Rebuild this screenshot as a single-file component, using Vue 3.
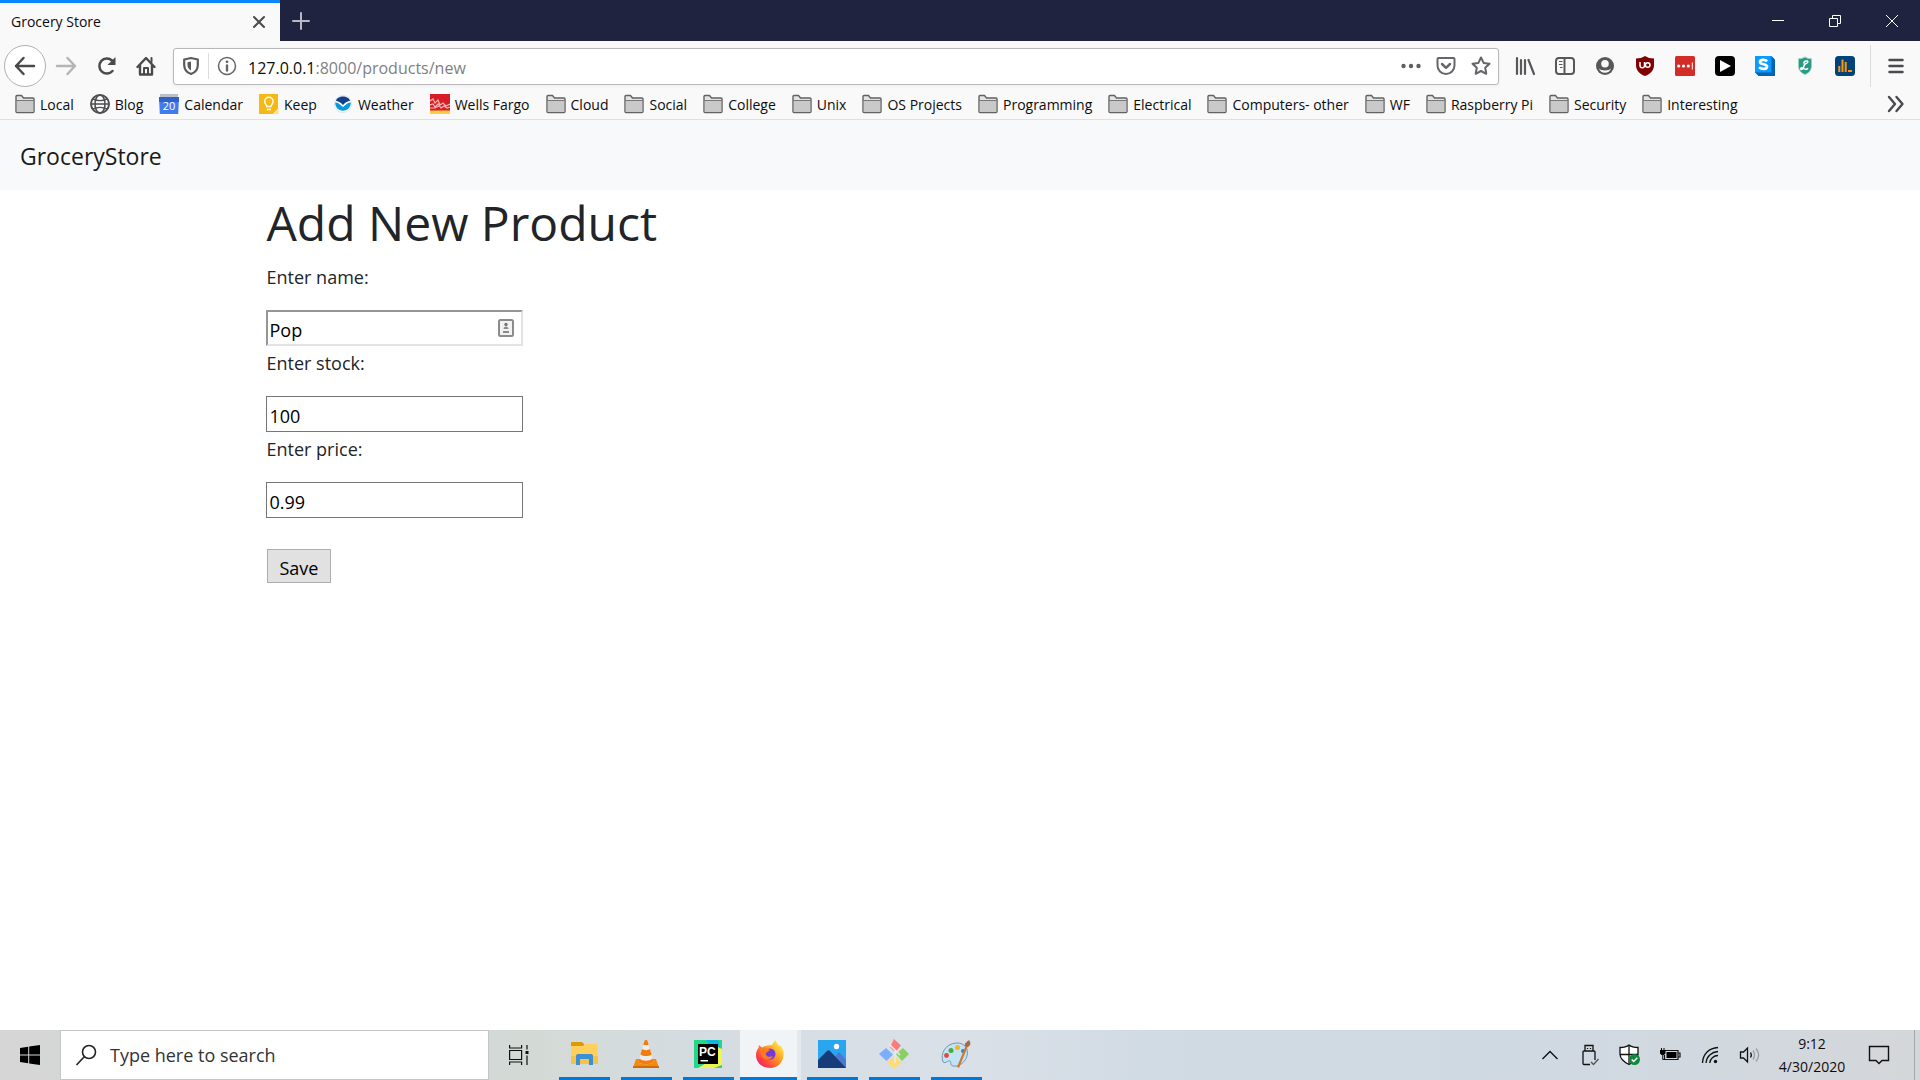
<script setup>
import { ref } from 'vue'

const bookmarks = [
  { name: 'Local', icon: 'folder' },
  { name: 'Blog', icon: 'globe' },
  { name: 'Calendar', icon: 'calendar' },
  { name: 'Keep', icon: 'keep' },
  { name: 'Weather', icon: 'weather' },
  { name: 'Wells Fargo', icon: 'wells' },
  { name: 'Cloud', icon: 'folder' },
  { name: 'Social', icon: 'folder' },
  { name: 'College', icon: 'folder' },
  { name: 'Unix', icon: 'folder' },
  { name: 'OS Projects', icon: 'folder' },
  { name: 'Programming', icon: 'folder' },
  { name: 'Electrical', icon: 'folder' },
  { name: 'Computers- other', icon: 'folder' },
  { name: 'WF', icon: 'folder' },
  { name: 'Raspberry Pi', icon: 'folder' },
  { name: 'Security', icon: 'folder' },
  { name: 'Interesting', icon: 'folder' },
]

const product = ref({ name: 'Pop', stock: '100', price: '0.99' })
const search = ref('')
</script>

<template>
  <div class="screen">
    <header class="titlebar">
      <div class="tab">
        <span>Grocery Store</span>
        <button class="icon-btn" aria-label="Close tab">
          <svg width="14" height="14" viewBox="0 0 14 14"><path d="M2 2l10 10M12 2L2 12" stroke="#4a4a4c" stroke-width="2" stroke-linecap="round" /></svg>
        </button>
      </div>
      <button class="icon-btn new-tab" aria-label="New tab">
        <svg width="18" height="18" viewBox="0 0 18 18"><path d="M9 1v16M1 9h16" stroke="#b9b9c4" stroke-width="2" stroke-linecap="round" /></svg>
      </button>
      <div class="window-buttons">
        <button class="icon-btn" aria-label="Minimize">
          <svg width="14" height="14" viewBox="0 0 14 14"><path d="M1 6.500h12" stroke="#fff" /></svg>
        </button>
        <button class="icon-btn" aria-label="Restore">
          <svg width="14" height="14" viewBox="0 0 14 14" fill="none" stroke="#fff"><path d="M1.500 4.500h8v8h-8zM4.500 4V1.500h8v8H10" /></svg>
        </button>
        <button class="icon-btn" aria-label="Close">
          <svg width="14" height="14" viewBox="0 0 14 14"><path d="M1 1l12 12M13 1L1 13" stroke="#fff" /></svg>
        </button>
      </div>
    </header>

    <nav class="toolbar" aria-label="Navigation">
      <button class="icon-btn back" aria-label="Back">
        <svg width="22" height="20" viewBox="0 0 22 20" fill="none" stroke="#4a4a4c" stroke-width="2.500" stroke-linecap="round" stroke-linejoin="round"><path d="M20 10H2M9.500 2L2 10l7.500 8" /></svg>
      </button>
      <button class="icon-btn nav" aria-label="Forward">
        <svg width="22" height="20" viewBox="0 0 22 20" fill="none" stroke="#b5b5b6" stroke-width="2.500" stroke-linecap="round" stroke-linejoin="round"><path d="M2 10h18M12.500 2L20 10l-7.500 8" /></svg>
      </button>
      <button class="icon-btn nav" aria-label="Reload">
        <svg width="20" height="20" viewBox="0 0 20 20"><path d="M16.500 15A7.500 7.500 0 1 1 16 4.500" fill="none" stroke="#4a4a4c" stroke-width="2.500" stroke-linecap="round" /><path d="M19.500 1v8h-8z" fill="#4a4a4c" /></svg>
      </button>
      <button class="icon-btn nav" aria-label="Home">
        <svg width="20" height="20" viewBox="0 0 20 20" fill="none" stroke="#4a4a4c" stroke-width="2.400" stroke-linejoin="round" stroke-linecap="round"><path d="M1.500 11L10 2l8.500 9M4 9.500V18.500h12V9.500" /><path d="M8 18v-6h4v6" stroke-width="2" /><path d="M15.500 2v4" stroke-width="2" /></svg>
      </button>
      <div class="urlbar">
        <svg width="18" height="20" viewBox="0 0 18 20"><path d="M9 2l6.800 1.500V9c0 4-2.500 7.500-6.800 9-4.300-1.500-6.800-5-6.800-9V3.500z" fill="none" stroke="#5a5a5c" stroke-width="2.200" stroke-linejoin="round" /><path d="M9 5.500v9C6.500 13 5.500 11 5.500 9V6.200z" fill="#5a5a5c" /></svg>
        <span class="divider"></span>
        <svg width="20" height="20" viewBox="0 0 20 20"><circle cx="10" cy="10" r="8.500" fill="none" stroke="#66666a" stroke-width="1.500" /><circle cx="10" cy="5.800" r="1.400" fill="#66666a" /><path d="M10 9.500v5" stroke="#66666a" stroke-width="2.400" stroke-linecap="round" /></svg>
        <a class="url" href="#"><b>127.0.0.1</b>:8000/products/new</a>
        <button class="icon-btn action" aria-label="Page actions">
          <svg width="22" height="20" viewBox="0 0 22 20" fill="#5f5f61"><circle cx="3.500" cy="10" r="2.200" /><circle cx="11" cy="10" r="2.200" /><circle cx="18.500" cy="10" r="2.200" /></svg>
        </button>
        <button class="icon-btn action" aria-label="Save to Pocket">
          <svg width="20" height="20" viewBox="0 0 20 20" fill="none" stroke="#66666a" stroke-width="2" stroke-linejoin="round" stroke-linecap="round"><path d="M2.500 2h15c.6 0 1 .4 1 1v6.500a8.500 8.500 0 0 1-17 0V3c0-.6.400-1 1-1z" /><path d="M6 8l4 3.800L14 8" stroke-width="2.500" /></svg>
        </button>
        <button class="icon-btn action" aria-label="Bookmark this page">
          <svg width="20" height="20" viewBox="0 0 20 20"><path d="M10 1.500l2.600 5.400 5.900.8-4.300 4.100 1.100 6L10 15l-5.300 2.800 1.100-6-4.300-4.100 5.900-.8z" fill="none" stroke="#66666a" stroke-width="2" stroke-linejoin="round" /></svg>
        </button>
      </div>
      <div class="extensions">
        <button class="icon-btn nav" aria-label="Library">
          <svg width="20" height="20" viewBox="0 0 20 20" stroke="#58585a" stroke-width="2.200" stroke-linecap="round"><path d="M2 2v16M6 4v14M10 4v14M13.500 4L19 18" /></svg>
        </button>
        <button class="icon-btn nav" aria-label="Sidebar">
          <svg width="20" height="20" viewBox="0 0 20 20" fill="none" stroke="#58585a" stroke-width="2"><rect x="1" y="2" width="18" height="16" rx="3" /><path d="M9.500 2v16" /><path d="M4 5.500h3.500M4 8.500h3.500M5 11.500h2.500" stroke-width="1.200" /></svg>
        </button>
        <button class="icon-btn nav" aria-label="Account">
          <svg width="20" height="20" viewBox="0 0 20 20"><circle cx="10" cy="10" r="9" fill="#58585a" /><circle cx="10" cy="7.700" r="3.800" fill="#f9f9fa" /><path d="M3.800 12.500c2 2.500 10.400 2.500 12.400 0-1 2.800-3.500 4.300-6.200 4.300s-5.200-1.500-6.200-4.300z" fill="#f9f9fa" /></svg>
        </button>
        <button class="icon-btn nav" aria-label="uBlock Origin">
          <svg width="20" height="20" viewBox="0 0 20 20"><path d="M10 0c2.500 1.700 5.500 2.500 9 2.500V9c0 5.500-3.500 9-9 11C4.500 18 1 14.500 1 9V2.500C4.500 2.500 7.500 1.700 10 0z" fill="#800000" /><path d="M5 6v3.500a2 2 0 0 0 4.500 0V6M9.500 9.500V6.500" fill="none" stroke="#fff" stroke-width="1.500" /><circle cx="12.700" cy="9" r="2.300" fill="none" stroke="#fff" stroke-width="1.500" /></svg>
        </button>
        <button class="icon-btn nav" aria-label="LastPass">
          <svg width="20" height="20" viewBox="0 0 20 20"><rect width="20" height="20" rx="1.500" fill="#d32d27" /><g fill="#fff"><circle cx="3.700" cy="10" r="1.600" /><circle cx="8.500" cy="10" r="1.600" /><circle cx="13.300" cy="10" r="1.600" /><path d="M16.800 6.500h1v7h-1z" /></g></svg>
        </button>
        <button class="icon-btn nav" aria-label="Player">
          <svg width="20" height="20" viewBox="0 0 20 20"><rect width="20" height="20" rx="4" fill="#000" /><path d="M5 4l11 6-11 6z" fill="#fff" /></svg>
        </button>
        <button class="icon-btn nav" aria-label="Stylus">
          <svg width="20" height="20" viewBox="0 0 20 20"><path d="M0 0h16.500L20 3.500V20H3.500L0 16.500z" fill="#0063b5" /><path d="M0 0h16.500v16.500H0z" fill="#0a9bff" /><path d="M12.200 5.200C10.500 3.500 5 3 5 6s7 1.500 7 4.500-5.500 3-8 .8" fill="none" stroke="#fff" stroke-width="2.800" /></svg>
        </button>
        <button class="icon-btn nav" aria-label="Legal shield">
          <svg width="20" height="20" viewBox="0 0 20 20"><path d="M10 1c2 1.300 4 1.800 6.500 1.800V9.500c0 4.500-2.500 7.500-6.500 9-4-1.500-6.500-4.500-6.500-9V2.800C6 2.800 8 2.300 10 1z" fill="#279a82" stroke="#9acfc3" /><path d="M9 7.500C8.500 5 13 4 12.800 6c-.2 1.800-3 1.300-3.600 3.200-.6 2-1 4.300-2.600 4.300-1.500 0-.8-2 .8-1.500 1.800.5 3.600 2.800 5.600.3" fill="none" stroke="#fff" stroke-width="1.600" /></svg>
        </button>
        <button class="icon-btn nav" aria-label="Statistics">
          <svg width="20" height="20" viewBox="0 0 20 20"><rect width="20" height="20" rx="3.500" fill="#00427a" /><path d="M4.300 16V10M7.500 16V3.500M10.700 16V6M13 15h4" stroke="#ff9500" stroke-width="2" fill="none" /></svg>
        </button>
      </div>
      <button class="icon-btn menu" aria-label="Menu">
        <svg width="16" height="18" viewBox="0 0 16 18"><path d="M1.500 3h13M1.500 9h13M1.500 15h13" stroke="#4a4a4c" stroke-width="2.500" stroke-linecap="round" /></svg>
      </button>
    </nav>

    <nav class="bookmarks" aria-label="Bookmarks">
      <a v-for="b in bookmarks" :key="b.name" class="bookmark" href="#">
        <svg v-if="b.icon === 'folder'" width="20" height="20" viewBox="0 0 20 20"><path d="M1 2.500c0-.6.400-1 1-1h4.500l2 2.500H18c.6 0 1 .4 1 1V17.500c0 .6-.4 1-1 1H2c-.6 0-1-.4-1-1z" fill="#e4e4e5" stroke="#626263" stroke-width="1.400" /><path d="M1.800 7h16.400v10.800H1.800z" fill="#c9c9ca" /><path d="M1 6.500h18" stroke="#77777a" /></svg>
        <svg v-else-if="b.icon === 'globe'" width="20" height="20" viewBox="0 0 20 20" fill="none" stroke="#4f4f51" stroke-width="1.600"><circle cx="10" cy="10" r="9" stroke-width="2" /><ellipse cx="10" cy="10" rx="5" ry="9" /><path d="M1 10h18M3 5c4 2 10 2 14 0M3 15c4-2 10-2 14 0" /></svg>
        <svg v-else-if="b.icon === 'calendar'" width="20" height="20" viewBox="0 0 20 20"><path d="M1 0h18v4H1z" fill="#b9c0cc" /><path d="M0 3h20l-.8 17H.8z" fill="#3f7bea" /><path d="M0 3h20v5H0z" fill="#3060c8" /><text x="10" y="16" text-anchor="middle" font-size="11" fill="#fff">20</text></svg>
        <svg v-else-if="b.icon === 'keep'" width="20" height="20" viewBox="0 0 20 20"><path d="M1 0h18v14.500L14 20H1c-.6 0-1-.4-1-1V1c0-.6.400-1 1-1z" fill="#f6b913" /><path d="M19.500 14.500V19c0 .6-.4 1-1 1H14z" fill="#fbe08f" /><path d="M7.800 12.500c0-1.500-2.100-2.500-2.100-5a4.200 4.200 0 0 1 8.400 0c0 2.500-2.100 3.500-2.100 5z" fill="none" stroke="#fff" stroke-width="1.400" /><path d="M7.800 15.500H12" stroke="#fff" stroke-width="1.600" /></svg>
        <svg v-else-if="b.icon === 'weather'" width="20" height="20" viewBox="0 0 20 20"><circle cx="10" cy="10" r="8.500" fill="#fff" stroke="#dbe6ee" /><path d="M3 7c1-6 13-6 14 0-2.500 0-4 1-7 4-3-3-4.500-4-7-4z" fill="#12418c" /><path d="M2.200 8.500C5 8.500 7 10.500 10 13c3-2.500 5-4.500 7.800-4.500 0 11-15.600 11-15.600 0z" fill="#0899db" /></svg>
        <svg v-else width="20" height="20" viewBox="0 0 20 20"><path d="M0 0h20v17H0z" fill="#d71e28" /><path d="M0 16.500h20V20H0z" fill="#ffcd41" /><path d="M0 7l3-2 2 4 3-3 2 5 3-2 3 3 4-2M0 11l3-1 2 3 3-3 3 4 3-2 3 2 3-1M0 14l5 0 4-2" fill="none" stroke="#f3b3b5" stroke-width="1.200" /></svg>
        <span>{{ b.name }}</span>
      </a>
      <button class="icon-btn overflow" aria-label="More bookmarks">
        <svg width="18" height="18" viewBox="0 0 18 18" fill="none" stroke="#4a4a4c" stroke-width="2.400" stroke-linecap="round" stroke-linejoin="round"><path d="M2 2l6 7-6 7M9.500 2l6 7-6 7" /></svg>
      </button>
    </nav>

    <div class="site-nav"><a href="#">GroceryStore</a></div>

    <main class="page">
      <form @submit.prevent>
        <h1>Add New Product</h1>
        <label for="name">Enter name:</label>
        <div class="field">
          <input id="name" v-model="product.name" class="inset" type="text" />
          <svg class="autofill" width="16" height="18" viewBox="0 0 16 18"><rect x="1" y="1" width="14" height="16" rx="1.500" fill="#f2f2f2" stroke="#8b8b8b" stroke-width="2" /><circle cx="8" cy="5.500" r="1.700" fill="#777" /><path d="M5.500 10c0-3.500 5-3.500 5 0zM5 12h6v2H5z" fill="#8b8b8b" /></svg>
        </div>
        <label for="stock">Enter stock:</label>
        <div class="field"><input id="stock" v-model="product.stock" type="text" /></div>
        <label for="price">Enter price:</label>
        <div class="field"><input id="price" v-model="product.price" type="text" /></div>
        <button class="save" type="submit">Save</button>
      </form>
    </main>

    <footer class="taskbar">
      <button class="icon-btn start" aria-label="Start">
        <svg width="20" height="20" viewBox="0 0 20 20"><path d="M0 2.900L8.200 1.700v7.800H0zM9.200 1.500L20 0v9.500H9.200zM0 10.500h8.200v7.800L0 17.100zM9.200 10.500H20V20L9.200 18.500z" /></svg>
      </button>
      <label class="search">
        <svg width="22" height="22" viewBox="0 0 22 22" fill="none" stroke="#222" stroke-width="1.600"><circle cx="14" cy="8" r="6.500" /><path d="M9.500 12.500L1.500 21" /></svg>
        <input v-model="search" type="text" placeholder="Type here to search" aria-label="Search" />
      </label>
      <button class="icon-btn taskview" aria-label="Task view">
        <svg width="20" height="20" viewBox="0 0 20 20" fill="none" stroke="#111" stroke-width="1.200"><path d="M.6 5.500h12v9H.6zM.6 0v3h12V0M.6 20v-3h12v3M18 0v4.500M18 10.500V20" /><path d="M16.500 6h3v3h-3z" fill="#111" stroke="none" /></svg>
      </button>
      <button class="app" aria-label="File Explorer">
        <svg width="28" height="28" viewBox="0 0 28 28"><path d="M1 3c0-.6.400-1 1-1h10l2 2v3H1z" fill="#dc9b05" /><path d="M1 6h12l2-2h12.500v20H1z" fill="#ffd15c" /><path d="M1 16h27v8H1z" fill="#f8c243" /><path d="M6 25V16c0-1 .5-2 2-2h13c1.500 0 2 1 2 2v9h-4v-6h-9v6z" fill="#3b8fd6" /></svg>
      </button>
      <button class="app" aria-label="VLC">
        <svg width="28" height="28" viewBox="0 0 28 28"><path d="M4 19h20l3 9H1z" fill="#f28a10" /><path d="M12.500 1c0-1.300 3-1.300 3 0L21.500 22c-2 3-13 3-15 0z" fill="#ececec" /><path d="M12.500 1c0-1.300 3-1.300 3 0L16.700 5h-5.400zM10 9c2 1.500 6 1.500 8 0l1.500 5.500c-3 2-8 2-11 0zM7.500 18.500c3 3 10 3 13 0l1 3.500c-2 3-13 3-15 0z" fill="#f47b0d" /><path d="M1 26h26v2H1z" fill="#cf6c05" /></svg>
      </button>
      <button class="app" aria-label="PyCharm">
        <svg width="28" height="28" viewBox="0 0 28 28"><path d="M0 0h28v28H0z" fill="#21d789" /><path d="M12 0h12l4 14-6 2z" fill="#12b6de" /><path d="M22 6l6 3v16l-8 3H4l10-6z" fill="#eef54b" /><path d="M4 4h20v20H4z" /><text x="5" y="16" font-size="12" font-weight="700" fill="#fff">PC</text><path d="M6.500 20H14v1.500H6.500z" fill="#fff" /></svg>
      </button>
      <button class="app active" aria-label="Firefox">
        <svg width="28" height="28" viewBox="0 0 28 28">
          <defs><linearGradient id="fox" x1="1" y1="0" x2="0" y2="1"><stop offset="0.100" stop-color="#fff04a" /><stop offset="0.450" stop-color="#ff9520" /><stop offset="0.750" stop-color="#ff3f45" /><stop offset="1" stop-color="#e01684" /></linearGradient></defs>
          <path d="M16 5l3-5c1 3 3 3 4 6l1-1c3 4 4 7 3.500 11-1 7-6 12-13.500 12S0 23 0 15c0-3 1-5.500 2.500-7L3 5l3 2.500C8 6 12 5 16 5z" fill="url(#fox)" /><circle cx="14" cy="14" r="5.500" fill="#7438df" /><path d="M4 9c4-2 7-1 10 1l-4 3c-1 3 3 5 7 3-2 5-11 4-12-2z" fill="#ff7a20" />
        </svg>
      </button>
      <button class="app" aria-label="Photos">
        <svg width="28" height="28" viewBox="0 0 28 28"><path d="M0 0h28v28H0z" fill="#2aa6ee" /><path d="M16 18l5-6 7 8v8H17z" fill="#4b76d2" /><path d="M0 20L9 11c1-1 2-1 3 0l16 17H0z" fill="#153c78" /><circle cx="18.500" cy="6.500" r="2.700" fill="#fff" /></svg>
      </button>
      <button class="app" aria-label="Git Bash">
        <svg width="30" height="30" viewBox="0 0 30 30" stroke-linejoin="round"><path d="M15 0l7 6.500-6 7-5-5.500z" fill="#fc7b7b" /><path d="M7 9l7 6.500-6.500 6.500L0 15z" fill="#7caefb" /><path d="M24 9l6 6-7 7-6-7z" fill="#89d05e" /><path d="M15 17l7 6.500-7 6.500-7-6.500z" fill="#fddc74" /><path d="M10 5l6 6v13M16 11l5 5" fill="none" stroke="#e8ecef" stroke-width="1.500" /></svg>
      </button>
      <button class="app" aria-label="Paint">
        <svg width="30" height="28" viewBox="0 0 30 28"><path d="M2 22C-1 14 4 4 15 3c8-.5 13 5 11 13-2 7-9 11-14 10-4-1-1-4-3-5s-4 3-7 1z" fill="#c3e2f6" stroke="#7698b1" /><circle cx="5.500" cy="15.500" r="2.400" fill="#dc4b3c" /><circle cx="10" cy="10.500" r="2.500" fill="#48ac3a" /><circle cx="16.500" cy="7.500" r="2.500" fill="#f7b519" /><circle cx="22" cy="11" r="2" fill="#3981d0" /><path d="M25 5l2 1-9 22-2-1z" fill="#cd7a2c" /><path d="M24 6c-1-3 2-4 4-6 2 3 2 5-1 7z" fill="#a06f45" /></svg>
      </button>
      <div class="tray">
        <button class="icon-btn nav" aria-label="Hidden icons"><svg width="18" height="18" viewBox="0 0 18 18"><path d="M1.500 13L9 5.500l7.500 7.500" fill="none" stroke="#111" stroke-width="1.400" /></svg></button>
        <button class="icon-btn nav" aria-label="USB"><svg width="18" height="22" viewBox="0 0 18 22" fill="none" stroke="#111" stroke-width="1.300"><path d="M4 7V1.500h8V7M3 7h10c.6 0 1 .4 1 1v8M9 20.500H3c-.6 0-1-.4-1-1V8c0-.6.400-1 1-1M6.500 4v1M9.500 4v1" /><path d="M10 18l2.500 2.500L17.500 15" stroke="#555" /></svg></button>
        <button class="icon-btn nav" aria-label="Security"><svg width="22" height="22" viewBox="0 0 22 22"><path d="M10 1c2.500 2 5 2.500 9 2.500V10c0 5-4 8-9 10.500C5 18 1 15 1 10V3.500C5 3.500 7.500 3 10 1z" fill="#fff" stroke="#111" stroke-width="1.300" /><path d="M10 1v19M1 10.500h18" stroke="#111" stroke-width="1.300" /><circle cx="15.500" cy="15.500" r="5.500" fill="#10893e" /><path d="M12.700 15.500l2 2 3.600-3.700" fill="none" stroke="#fff" stroke-width="1.500" /></svg></button>
        <button class="icon-btn nav" aria-label="Battery"><svg width="22" height="18" viewBox="0 0 22 18"><path d="M5.500 4.500H19v9H5.500V9M19.500 7H21v4h-1.500" fill="none" stroke="#111" stroke-width="1.200" /><path d="M7.500 6h10v6h-10zM1 4h5.500v3.500L5 9H2.500L1 7.500zM2 2h1v2H2zM4.500 2h1v2h-1z" /><path d="M3.700 8v5.500H6" fill="none" stroke="#111" /></svg></button>
        <button class="icon-btn nav" aria-label="Network"><svg width="18" height="18" viewBox="0 0 18 18" fill="none" stroke="#111" stroke-width="1.300"><path d="M1.500 17C2 8 8 2 17 1.500M5 17C5.500 10.500 10.500 6 17 5.500M8.700 17c.3-4 4-7.500 8.300-7.500" /><circle cx="14.500" cy="15.500" r="1.700" fill="#111" stroke="none" /></svg></button>
        <button class="icon-btn nav" aria-label="Volume"><svg width="22" height="18" viewBox="0 0 22 18" fill="none" stroke="#111" stroke-width="1.300"><path d="M1.500 6h3l4-4v14l-4-4h-3zM11.500 6.500c1 1.500 1 3.500 0 5" /><path d="M14 4.500c2 2.500 2 6.500 0 9M17 2.500c3.300 4 3.300 9 0 13" stroke="#999da1" /></svg></button>
        <time class="clock" datetime="2020-04-30T09:12"><span>9:12</span><span>4/30/2020</span></time>
        <button class="icon-btn notifications" aria-label="Notifications"><svg width="22" height="22" viewBox="0 0 22 22"><path d="M1.500 2.500h19v14h-6.500L11 19.500l-3-3H1.500z" fill="none" stroke="#111" stroke-width="1.400" /></svg></button>
        <span class="show-desktop"></span>
      </div>
    </footer>
  </div>
</template>

<style>
body {
  margin: 0;
}
</style>

<style scoped>
.screen {
  display: flex;
  flex-direction: column;
  min-height: 100vh;
  background: #fff;
  color: #0c0c0d;
  font-family: "Open Sans", "Noto Sans", sans-serif;
  font-size: 14px;
}
.screen * {
  box-sizing: border-box;
}
svg {
  display: block;
  flex: none;
}
a {
  color: inherit;
  text-decoration: none;
}
.icon-btn {
  display: flex;
  align-items: center;
  justify-content: center;
  flex: none;
  padding: 0;
  border: 0;
  background: none;
}
.titlebar {
  display: flex;
  height: 41px;
  background: #202340;
}
.tab {
  display: flex;
  align-items: center;
  justify-content: space-between;
  width: 280px;
  padding: 0 14px 1px 11px;
  border-top: 3px solid #0a84ff;
  background: #f9f9fa;
}
.new-tab {
  width: 42px;
}
.window-buttons {
  display: flex;
  margin-left: auto;
}
.window-buttons .icon-btn {
  width: 57px;
}
.toolbar {
  display: flex;
  align-items: center;
  height: 50px;
  padding-left: 4px;
  background: #f9f9fa;
}
.back {
  width: 42px;
  height: 42px;
  border: 1px solid #b1b1b3;
  border-radius: 50%;
  background: #fff;
}
.nav {
  width: 40px;
  height: 40px;
}
.urlbar {
  display: flex;
  flex: 1;
  align-items: center;
  height: 37px;
  margin: 0 6px 0 7px;
  padding-left: 8px;
  border: 1px solid #b8b8ba;
  border-radius: 3px;
  background: #fff;
  box-shadow: 0 1px 4px #0000000d;
}
.divider {
  width: 1px;
  height: 26px;
  margin: 0 8px;
  background: #dcdcde;
}
.url {
  flex: 1;
  margin-left: 11px;
  padding-top: 3px;
  color: #808083;
  font-size: 16px;
}
.url b {
  color: #0c0c0d;
  font-weight: 400;
}
.action {
  width: 35px;
  height: 35px;
}
.extensions {
  display: flex;
}
.menu {
  width: 50px;
  height: 42px;
  margin-left: 5px;
  border-left: 1px solid #dcdcde;
}
.bookmarks {
  display: flex;
  align-items: center;
  gap: 16px;
  height: 29px;
  padding: 0 15px 3px;
  border-bottom: 1px solid #e0e0e1;
  background: #f9f9fa;
}
.bookmark {
  display: flex;
  align-items: center;
  gap: 5px;
  white-space: nowrap;
}
.bookmark span {
  padding-top: 2px;
}
.overflow {
  margin-left: auto;
}
.site-nav {
  display: flex;
  align-items: center;
  height: 70px;
  padding: 2px 20px 0;
  background: #f8f9fb;
  color: #1a1a1a;
  font-size: 23px;
}
.page {
  flex: 1;
  width: 100%;
  max-width: 1425px;
  margin: 0 auto;
  padding: 0 19px;
}
form {
  display: flex;
  flex-direction: column;
  align-items: flex-start;
  color: #212529;
}
h1 {
  margin: 0 0 10px;
  padding-top: 5px;
  font-size: 48px;
  font-weight: 400;
  line-height: 55px;
}
form label {
  margin-bottom: 19px;
  padding-top: 3px;
  font-size: 18px;
  line-height: 28px;
}
.field {
  position: relative;
  height: 36px;
  margin-left: -1px;
}
.field input {
  width: 257px;
  height: 36px;
  padding: 4px 3px 0;
  border: 1px solid #767676;
  color: #000;
  font: inherit;
  font-size: 18px;
}
.field .inset {
  border: 2px solid;
  border-color: #969696 #e3e3e3 #e3e3e3 #969696;
  padding: 3px 2px 0;
}
.autofill {
  position: absolute;
  top: 9px;
  right: 9px;
}
.save {
  height: 34px;
  margin-top: 31px;
  padding: 3px 12px 0;
  border: 1px solid #adadad;
  background: #e1e1e1;
  color: #000;
  font: inherit;
  font-size: 18px;
}
.taskbar {
  display: flex;
  height: 50px;
  background: linear-gradient(90deg, #d5d6d5 0%, #d3dad6 28%, #d5dce1 36%, #dae0e8 50%, #cfdae3 62%, #d0d9e2 82%, #d4d7da 100%);
}
.start {
  width: 60px;
}
.search {
  display: flex;
  align-items: center;
  gap: 13px;
  width: 429px;
  padding-left: 14px;
  border: 1px solid #c6c6c6;
  background: #fff;
}
.search input {
  flex: 1;
  min-width: 0;
  padding: 0;
  border: 0;
  outline: 0;
  font: inherit;
  font-size: 18px;
}
.search input::placeholder {
  color: #333;
  opacity: 1;
}
.taskview {
  width: 60px;
  margin-right: 5px;
}
.app {
  display: flex;
  align-items: center;
  justify-content: center;
  width: 51px;
  margin: 0 6px 0 5px;
  padding: 0 2px 0 0;
  border: 0;
  border-bottom: 3px solid #0078d7;
  background: none;
}
.app.active {
  width: 57px;
  margin: 0 5px 0 0;
  padding: 0 0 0 2px;
  background: #f1f4f7;
  box-shadow: 4px 0 #e4e9ee;
}
.tray {
  display: flex;
  align-items: center;
  margin-left: auto;
}
.clock {
  display: flex;
  flex-direction: column;
  width: 84px;
  font-size: 14px;
  line-height: 23px;
  text-align: center;
}
.notifications {
  width: 50px;
  margin-right: 10px;
}
.show-desktop {
  width: 6px;
  height: 50px;
  border-left: 1px solid #a5a8aa;
}
</style>
